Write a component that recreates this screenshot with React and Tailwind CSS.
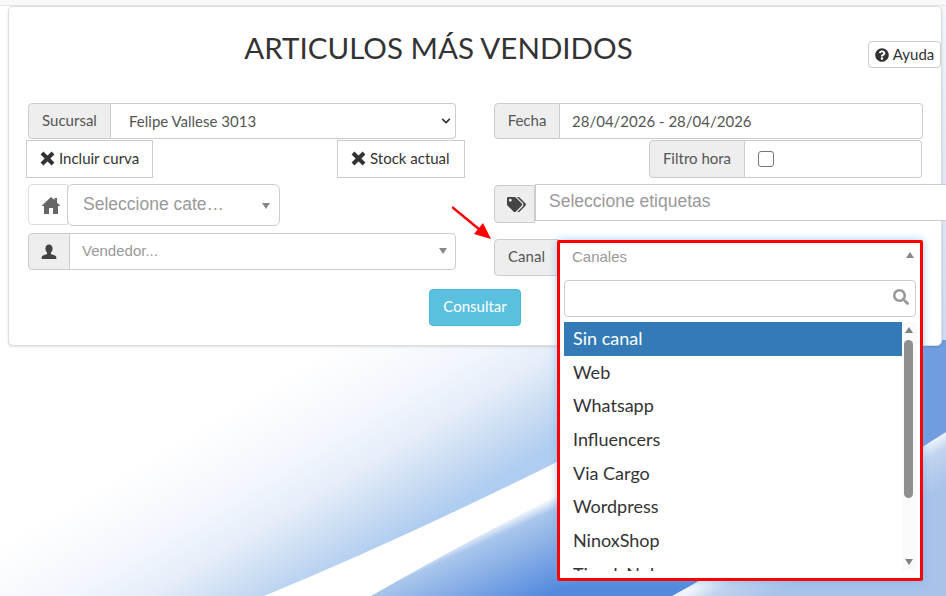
import React from 'react';
import { FaTags, FaQuestionCircle, FaSearch, FaChevronDown } from 'react-icons/fa';

const canales = ["Web", "Whatsapp", "Influencers", "Via Cargo", "Wordpress", "NinoxShop", "TiendaNube"];

const Wallpaper = () => (
  <svg className="absolute inset-0 w-full h-full" viewBox="0 0 946 596" preserveAspectRatio="none">
    <defs>
      <linearGradient id="wall-sky" gradientUnits="userSpaceOnUse" x1="245" y1="400" x2="365" y2="600">
        <stop offset="0" stopColor="#ffffff" />
        <stop offset="0.35" stopColor="#f1f5fc" />
        <stop offset="0.5" stopColor="#e6eef9" />
        <stop offset="0.72" stopColor="#c4d9f2" />
        <stop offset="0.85" stopColor="#afcdf0" />
      </linearGradient>
      <linearGradient id="wall-deep" gradientUnits="userSpaceOnUse" x1="520" y1="512" x2="557" y2="592">
        <stop offset="0" stopColor="#ffffff" />
        <stop offset="0.14" stopColor="#a9c6ec" />
        <stop offset="1" stopColor="#5289dd" />
      </linearGradient>
      <linearGradient id="wall-pale" gradientUnits="userSpaceOnUse" x1="800" y1="523" x2="825" y2="563">
        <stop offset="0" stopColor="#eef3fb" />
        <stop offset="0.3" stopColor="#c0d4ef" />
        <stop offset="1" stopColor="#a8c2ea" />
      </linearGradient>
      <linearGradient id="wall-top" gradientUnits="userSpaceOnUse" x1="500" y1="260" x2="946" y2="0">
        <stop offset="0" stopColor="#7ba4e3" />
        <stop offset="1" stopColor="#f3f6fc" />
      </linearGradient>
    </defs>
    <rect width="946" height="596" fill="url(#wall-sky)" />
    <path d="M264 596 Q400 540 557 462 L946 250 L946 596 Z" fill="#ffffff" />
    <path d="M371 596 Q460 545 558 495 L946 290 L946 596 Z" fill="url(#wall-deep)" />
    <rect x="800" y="340" width="146" height="256" fill="#6f9de0" />
    <path d="M672 596 Q800 525 946 432 L946 596 Z" fill="url(#wall-pale)" />
    <rect x="941" y="0" width="5" height="340" fill="url(#wall-top)" />
  </svg>
);

const Addon = ({ className, children }) => (
  <span className={"flex items-center justify-center shrink-0 bg-[#eeeeee] border border-[#cccccc] rounded-l text-[#555555] " + className}>
    {children}
  </span>
);

const Caret = ({ className }) => (
  <span className={"absolute w-0 h-0 border-x-[4px] border-x-transparent " + className} />
);

const Cross = () => (
  <svg width="15" height="15" viewBox="0 0 15 15" className="shrink-0" stroke="#333333" strokeWidth="4" fill="none">
    <path d="M2 2 L13 13 M13 2 L2 13" />
  </svg>
);

export default function App() {
  return (
    <div className="relative w-[946px] h-[596px] overflow-hidden bg-white text-[15px] text-[#555555] font-['Lato','Noto_Sans',sans-serif]">
      <Wallpaper />
      <div className="relative">
        <div className="h-[6px] bg-[#f8f8f8] border-b border-[#e6e6e6]" />
        <div className="relative ml-2 mr-[4px] h-[340px] bg-white border border-[#dddddd] rounded-[5px] shadow-sm">
          <div className="flex items-start h-[96px]">
            <h1 className="w-[859px] pt-[21px] text-center text-[29.5px] leading-[40px] font-normal text-[#333333]">
              ARTICULOS MÁS VENDIDOS
            </h1>
            <button className="mt-[34px] w-[73px] h-[27px] flex items-center justify-center gap-1 bg-white border border-[#cccccc] rounded text-[#333333]">
              <FaQuestionCircle className="w-[14px] h-[14px]" />
              Ayuda
            </button>
          </div>

          <div className="relative flex gap-[38px] ml-[19px]">
            {/* columna izquierda */}
            <div className="w-[428px] shrink-0">
              <div className="flex h-9">
                <Addon className="w-[83px] pb-[2px]">Sucursal</Addon>
                <div className="relative flex-1">
                  <select className="w-full h-full appearance-none pl-[18px] bg-white border border-l-0 border-[#cccccc] rounded-r text-[#555555]">
                    <option>Felipe Vallese 3013</option>
                  </select>
                  <FaChevronDown className="absolute right-[3px] top-[13px] w-[14px] h-[10px] text-[#333333]" />
                </div>
              </div>
              <div className="flex justify-between -ml-[2px] -mr-[9px] mt-px">
                <button className="flex items-center gap-[4px] h-[38px] w-[127px] pl-[13px] pb-[2px] bg-white border border-[#cccccc] text-[#333333]">
                  <Cross />
                  Incluir curva
                </button>
                <button className="flex items-center gap-[4px] h-[38px] w-[128px] pl-[13px] pb-[2px] bg-white border border-[#cccccc] text-[#333333]">
                  <Cross />
                  Stock actual
                </button>
              </div>
              <div className="flex mt-[6px]">
                <span className="flex items-center justify-center w-10 h-[41px] pl-[5px] bg-white border border-[#dddddd] rounded-l">
                  <svg width="20" height="20" viewBox="0 0 20 20" fill="#666666">
                    <path d="M10 2 L0.500 11 H3 V19 H8 V13 H12 V19 H17 V11 H19.500 L16 7.500 V3 H13.500 V5 Z" />
                  </svg>
                </span>
                <div className="relative w-[213px] h-[42px] -ml-px flex items-center pl-[15px] pb-[2px] bg-white border border-[#cccccc] rounded-md text-[17.5px] text-[#999999] font-['Liberation_Sans',sans-serif]">
                  Seleccione cate…
                  <Caret className="right-[9px] top-[18px] border-t-[6px] border-t-[#888888]" />
                </div>
              </div>
              <div className="flex mt-[7px]">
                <Addon className="w-[42px] h-[37px]">
                  <svg width="16" height="16" viewBox="0 0 16 16" fill="#444444">
                    <path d="M8 0.5c2.3 0 3.6 1.8 3.6 4 0 1.6-.7 3.1-1.6 4v1.4c1.900.7 5 1.500 5.300 3.200V15H.7v-1.900C1 11.400 4.100 10.600 6 9.900V8.500c-.9-.9-1.600-2.400-1.600-4 0-2.200 1.300-4 3.600-4z" />
                  </svg>
                </Addon>
                <div className="relative flex-1 -ml-px flex items-center pl-3 bg-white border border-[#cccccc] rounded-r text-[15px] text-[#999999] font-['Liberation_Sans',sans-serif]">
                  Vendedor...
                  <Caret className="right-[8px] top-[14px] border-t-[6px] border-t-[#888888]" />
                </div>
              </div>
            </div>

            {/* columna derecha */}
            <div className="w-[429px] shrink-0">
              <div className="flex h-9">
                <Addon className="w-[66px] pb-[2px]">Fecha</Addon>
                <input readOnly value="28/04/2026 - 28/04/2026" className="flex-1 min-w-0 pl-3 bg-white border border-l-0 border-[#cccccc] rounded-r text-[#555555]" />
              </div>
              <div className="flex h-[38px] ml-[155px] mr-px mt-px">
                <Addon className="w-[96px] pb-[2px]">Filtro hora</Addon>
                <div className="flex-1 flex items-center pl-[13px] bg-white border border-l-0 border-[#cccccc] rounded-r">
                  <input type="checkbox" className="appearance-none w-[16px] h-[16px] bg-white border border-[#767676] rounded-[3px]" />
                </div>
              </div>
              <div className="flex mt-[6px]">
                <Addon className="w-[41px] h-[38px] mt-px pl-[3px]">
                  <FaTags className="w-[19px] h-[19px] text-[#444444]" />
                </Addon>
                <div className="w-[500px] h-[37px] shrink-0 flex items-center pl-[13px] pb-[2px] bg-white border border-[#cccccc] text-[17.5px] text-[#999999] font-['Liberation_Sans',sans-serif]">
                  Seleccione etiquetas
                </div>
              </div>
              <div className="relative flex mt-[16px]">
                <Addon className="w-[65px] h-[37px] pb-[2px]">Canal</Addon>
                <div className="absolute left-[63px] top-px w-[366px] h-[341px] bg-white border-[3px] border-[#ff0000] rounded-[2px] shadow-[0_0_8px_rgba(102,175,233,0.6)] font-['Liberation_Sans',sans-serif]">
                  <div className="relative h-[37px] flex items-center pl-[12px] pb-[8px] text-[15px] text-[#999999]">
                    Canales
                    <Caret className="right-[6px] top-[9px] border-b-[6px] border-b-[#888888]" />
                  </div>
                  <div className="relative mx-[4px] h-[37px]">
                    <input className="w-full h-full bg-white border border-[#cccccc] rounded" />
                    <FaSearch className="absolute right-[7px] top-[9px] w-[16px] h-[16px] text-[#999999]" />
                  </div>
                  <div className="flex ml-[4px] mr-[3px] mt-[5px] h-[249px] overflow-hidden font-['Lato','Noto_Sans',sans-serif] text-[18px] text-[#333333]">
                    <ul className="flex-1">
                      <li className="h-[33.7px] pl-[9px] leading-[32px] bg-[#337ab7] text-white">Sin canal</li>
                      {canales.map((c) => (
                        <li key={c} className="h-[33.7px] pl-[9px] leading-[32.5px]">{c}</li>
                      ))}
                    </ul>
                    <div className="relative w-[15px] bg-[#fafafa]">
                      <Caret className="left-[3px] top-[5px] border-b-[6px] border-b-[#808080]" />
                      <div className="absolute left-[2px] top-[18px] w-[9px] h-[158px] bg-[#8f8f8f] rounded-full" />
                      <Caret className="left-[3px] bottom-[6px] border-t-[6px] border-t-[#808080]" />
                    </div>
                  </div>
                </div>
              </div>
            </div>

            <svg className="absolute left-[424px] top-[100px]" width="44" height="40" viewBox="0 0 44 40">
              <path d="M0 4 L28 27" stroke="#ff0000" strokeWidth="2.5" fill="none" />
              <path d="M39 36 L22 31 L31 20 Z" fill="#ff0000" />
            </svg>
          </div>

          <button className="mt-[13px] ml-[420px] w-[92px] h-[37px] pb-[2px] bg-[#5bc0de] border border-[#46b8da] rounded text-white">
            Consultar
          </button>
        </div>
      </div>
    </div>
  );
}
